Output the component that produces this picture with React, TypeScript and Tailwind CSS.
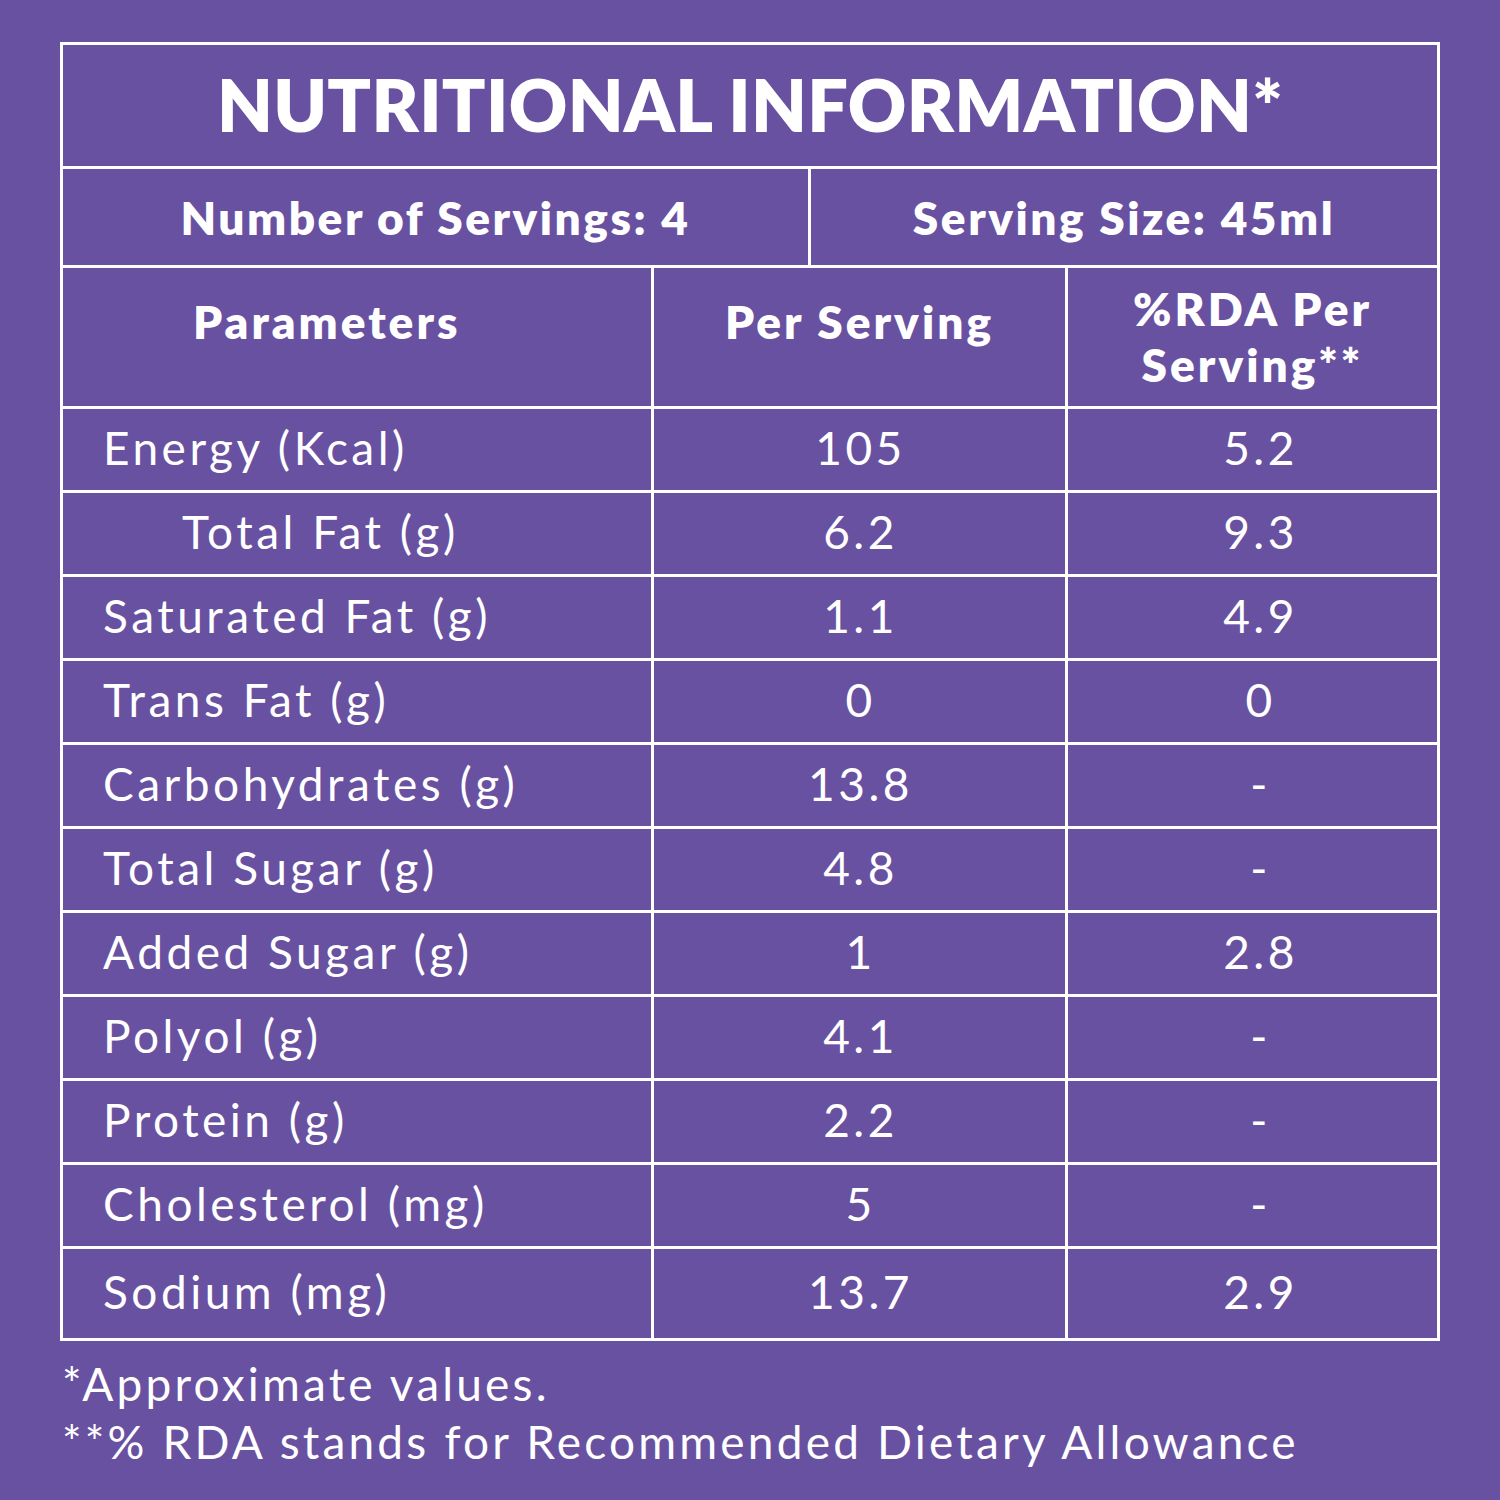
const rows: [string, string, string, boolean?][] = [
  ['Energy (Kcal)', '105', '5.2'],
  ['Total Fat (g)', '6.2', '9.3', true],
  ['Saturated Fat (g)', '1.1', '4.9'],
  ['Trans Fat (g)', '0', '0'],
  ['Carbohydrates (g)', '13.8', '-'],
  ['Total Sugar (g)', '4.8', '-'],
  ['Added Sugar (g)', '1', '2.8'],
  ['Polyol (g)', '4.1', '-'],
  ['Protein (g)', '2.2', '-'],
  ['Cholesterol (mg)', '5', '-'],
  ['Sodium (mg)', '13.7', '2.9'],
]

export default function App() {
  return (
    <div className="w-[1500px] h-[1500px] bg-[#6951a1] text-white pt-[42px] font-['Lato',sans-serif]">
      <div className="ml-[60px] w-[1380px] border-[3px] border-white">
        {/* Title */}
        <div className="h-[124px] border-b-[3px] border-white flex items-center justify-center">
          <h1 className="text-[72px] font-extrabold tracking-[0.3px] leading-none mt-[-4px]">
            NUTRITIONAL INFORMATION*
          </h1>
        </div>

        {/* Servings */}
        <div className="h-[99px] border-b-[3px] border-white flex text-[46px] font-extrabold tracking-[2.5px]">
          <div className="w-[748px] border-r-[3px] border-white flex items-center justify-center">
            Number of Servings: 4
          </div>
          <div className="flex-1 flex items-center justify-center">Serving Size: 45ml</div>
        </div>

        {/* Column headers */}
        <div className="h-[141px] border-b-[3px] border-white flex text-[46px] font-extrabold tracking-[3px] leading-[56px]">
          <div className="w-[591px] border-r-[3px] border-white flex items-center pl-[130px] pb-[30px]">
            Parameters
          </div>
          <div className="w-[414px] border-r-[3px] border-white flex items-center justify-center pb-[30px]">
            Per Serving
          </div>
          <div className="flex-1 flex items-center justify-center text-center">
            %RDA Per
            <br />
            Serving**
          </div>
        </div>

        {/* Data rows */}
        {rows.map(([name, per, rda, indent], i) => (
          <div
            key={name}
            className={
              i === rows.length - 1
                ? 'h-[89px] flex text-[46px] tracking-[3.5px]'
                : 'h-[84px] border-b-[3px] border-white flex text-[46px] tracking-[3.5px]'
            }
          >
            <div
              className={
                indent
                  ? 'w-[591px] border-r-[3px] border-white flex items-center pl-[119px] pb-[5px]'
                  : 'w-[591px] border-r-[3px] border-white flex items-center pl-[40px] pb-[5px]'
              }
            >
              {name}
            </div>
            <div className="w-[414px] border-r-[3px] border-white flex items-center justify-center pl-[2px] pb-[5px]">
              {per}
            </div>
            <div className="flex-1 flex items-center justify-center pl-[16px] pb-[5px]">{rda}</div>
          </div>
        ))}
      </div>

      {/* Footnotes */}
      <div className="ml-[62px] mt-[14px] text-[46px] tracking-[3.2px] leading-[58px]">
        <p>*Approximate values.</p>
        <p>**% RDA stands for Recommended Dietary Allowance</p>
      </div>
    </div>
  )
}
